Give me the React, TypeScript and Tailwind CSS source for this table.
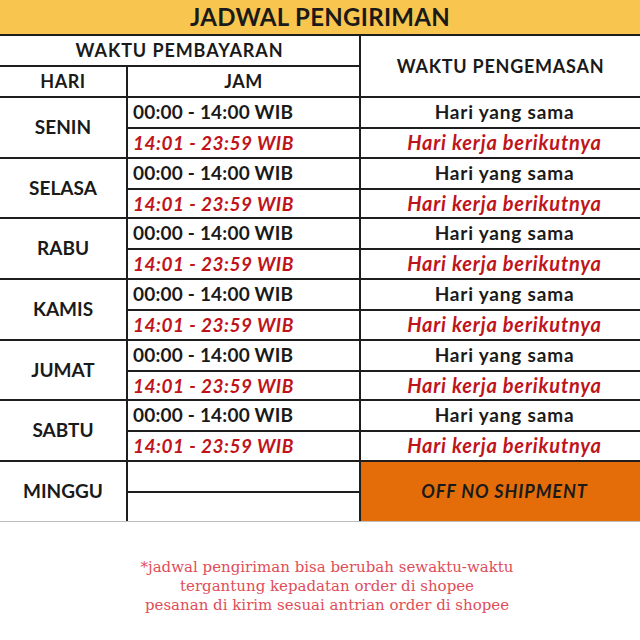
const days = [
  { name: 'SENIN', h: 61 },
  { name: 'SELASA', h: 60 },
  { name: 'RABU', h: 61 },
  { name: 'KAMIS', h: 61 },
  { name: 'JUMAT', h: 60 },
  { name: 'SABTU', h: 61 },
]

const font = { fontFamily: 'Lato, "Open Sans", sans-serif' }

export default function App() {
  return (
    <div className="w-[640px] h-[640px] bg-white overflow-hidden" style={font}>
      {/* Title */}
      <div className="h-[36px] bg-[#f8c64e] border-b-2 border-[#1e1e1e] flex items-center justify-center">
        <span className="text-[24px] font-bold text-[#1a1a1a] tracking-[0.3px]">JADWAL PENGIRIMAN</span>
      </div>

      {/* Header */}
      <div className="flex h-[62px] border-b-2 border-[#1e1e1e]">
        <div className="w-[361px] flex flex-col border-r-2 border-[#1e1e1e]">
          <div className="h-[31px] border-b-2 border-[#1e1e1e] flex items-center justify-center text-[18px] font-bold tracking-[0.9px] text-[#1a1a1a]">
            WAKTU PEMBAYARAN
          </div>
          <div className="flex-1 flex">
            <div className="w-[128px] border-r-2 border-[#1e1e1e] flex items-center justify-center text-[18px] font-bold tracking-[0.5px] text-[#1a1a1a]">
              HARI
            </div>
            <div className="flex-1 flex items-center justify-center text-[18px] font-bold tracking-[0.5px] text-[#1a1a1a]">JAM</div>
          </div>
        </div>
        <div className="flex-1 flex items-center justify-center text-[18px] font-bold tracking-[0.75px] text-[#1a1a1a]">
          WAKTU PENGEMASAN
        </div>
      </div>

      {/* Days */}
      {days.map((d) => (
        <div key={d.name} className="flex border-b-2 border-[#1e1e1e]" style={{ height: d.h }}>
          <div className="w-[128px] border-r-2 border-[#1e1e1e] flex items-center justify-center text-[19px] font-bold text-[#1a1a1a]">
            {d.name}
          </div>
          <div className="flex-1 flex flex-col">
            <div className="flex-1 flex border-b-2 border-[#1e1e1e]">
              <div className="w-[233px] border-r-2 border-[#1e1e1e] flex items-center pl-[5px] text-[19px] font-bold tracking-[0.2px] text-[#1a1a1a]">
                00:00 - 14:00 WIB
              </div>
              <div className="flex-1 flex items-center justify-center pl-[8px] text-[19px] font-bold tracking-[0.8px] text-[#1a1a1a]">
                Hari yang sama
              </div>
            </div>
            <div className="flex-1 flex">
              <div className="w-[233px] border-r-2 border-[#1e1e1e] flex items-center pl-[5px] text-[19px] font-bold italic tracking-[0.5px] text-[#c0141b]">
                14:01 - 23:59 WIB
              </div>
              <div className="flex-1 flex items-center justify-center pl-[8px] pb-[2px] text-[20px] leading-[24px] font-bold italic tracking-[0.8px] text-[#c0141b]">
                Hari kerja berikutnya
              </div>
            </div>
          </div>
        </div>
      ))}

      {/* Minggu */}
      <div className="flex h-[60px] border-b border-[#bdbdbd]">
        <div className="w-[128px] border-r-2 border-[#1e1e1e] flex items-center justify-center text-[19px] font-bold text-[#1a1a1a]">
          MINGGU
        </div>
        <div className="w-[233px] border-r-2 border-[#1e1e1e] flex flex-col">
          <div className="flex-1 border-b-2 border-[#1e1e1e]" />
          <div className="flex-1" />
        </div>
        <div className="flex-1 bg-[#e46d0a] flex items-center justify-center pl-[8px] text-[18px] font-bold italic tracking-[0.9px] text-[#1a1a1a]">
          OFF NO SHIPMENT
        </div>
      </div>

      {/* Note */}
      <div
        className="mt-[36px] pl-[14px] flex flex-col items-center text-[15px] leading-[19px] text-[#df4d59]"
        style={{ fontFamily: '"DejaVu Serif", serif' }}
      >
        <span>*jadwal pengiriman bisa berubah sewaktu-waktu</span>
        <span>tergantung kepadatan order di shopee</span>
        <span>pesanan di kirim sesuai antrian order di shopee</span>
      </div>
    </div>
  )
}
